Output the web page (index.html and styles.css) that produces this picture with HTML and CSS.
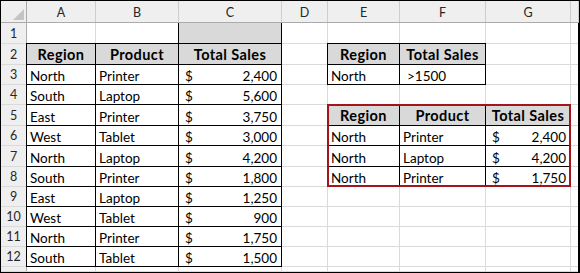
FILE: index.html
```html
<!DOCTYPE html>
<html>
<head>
<meta charset="utf-8">
<link rel="stylesheet" href="styles.css">
</head>
<body>
<div class="sheet">
  <!-- column headers -->
  <div class="corner"><svg width="25" height="21" viewBox="0 0 25 21"><polygon points="23,8 23,19 12,19" fill="#c4c4c4"/></svg></div>
  <div class="ch">A</div><div class="ch">B</div><div class="ch">C</div><div class="ch">D</div><div class="ch">E</div><div class="ch">F</div><div class="ch">G</div><div class="ch"></div>

  <!-- row 1 -->
  <div class="rh">1</div>
  <div class="c"></div><div class="c"></div><div class="c fill"></div><div class="c"></div><div class="c"></div><div class="c"></div><div class="c"></div><div class="c"></div>

  <!-- row 2 -->
  <div class="rh">2</div>
  <div class="c b h">Region</div><div class="c b h">Product</div><div class="c b h">Total Sales</div><div class="c"></div><div class="c b h">Region</div><div class="c b h">Total Sales</div><div class="c"></div><div class="c"></div>

  <!-- row 3 -->
  <div class="rh">3</div>
  <div class="c b">North</div><div class="c b">Printer</div><div class="c b n"><span>$</span><span>2,400</span></div><div class="c"></div><div class="c b">North</div><div class="c b crit">&gt;1500</div><div class="c"></div><div class="c"></div>

  <!-- row 4 -->
  <div class="rh">4</div>
  <div class="c b">South</div><div class="c b">Laptop</div><div class="c b n"><span>$</span><span>5,600</span></div><div class="c"></div><div class="c"></div><div class="c"></div><div class="c"></div><div class="c"></div>

  <!-- row 5 -->
  <div class="rh">5</div>
  <div class="c b">East</div><div class="c b">Printer</div><div class="c b n"><span>$</span><span>3,750</span></div><div class="c"></div><div class="c b h">Region</div><div class="c b h">Product</div><div class="c b h">Total Sales</div><div class="c"></div>

  <!-- row 6 -->
  <div class="rh">6</div>
  <div class="c b">West</div><div class="c b">Tablet</div><div class="c b n"><span>$</span><span>3,000</span></div><div class="c"></div><div class="c b">North</div><div class="c b">Printer</div><div class="c b n"><span>$</span><span>2,400</span></div><div class="c"></div>

  <!-- row 7 -->
  <div class="rh">7</div>
  <div class="c b">North</div><div class="c b">Laptop</div><div class="c b n"><span>$</span><span>4,200</span></div><div class="c"></div><div class="c b">North</div><div class="c b">Laptop</div><div class="c b n"><span>$</span><span>4,200</span></div><div class="c"></div>

  <!-- row 8 -->
  <div class="rh">8</div>
  <div class="c b">South</div><div class="c b">Printer</div><div class="c b n"><span>$</span><span>1,800</span></div><div class="c"></div><div class="c b">North</div><div class="c b">Printer</div><div class="c b n"><span>$</span><span>1,750</span></div><div class="c"></div>

  <!-- row 9 -->
  <div class="rh">9</div>
  <div class="c b">East</div><div class="c b">Laptop</div><div class="c b n"><span>$</span><span>1,250</span></div><div class="c"></div><div class="c"></div><div class="c"></div><div class="c"></div><div class="c"></div>

  <!-- row 10 -->
  <div class="rh">10</div>
  <div class="c b">West</div><div class="c b">Tablet</div><div class="c b n"><span>$</span><span>900</span></div><div class="c"></div><div class="c"></div><div class="c"></div><div class="c"></div><div class="c"></div>

  <!-- row 11 -->
  <div class="rh">11</div>
  <div class="c b">North</div><div class="c b">Printer</div><div class="c b n"><span>$</span><span>1,750</span></div><div class="c"></div><div class="c"></div><div class="c"></div><div class="c"></div><div class="c"></div>

  <!-- row 12 -->
  <div class="rh">12</div>
  <div class="c b">South</div><div class="c b">Tablet</div><div class="c b n"><span>$</span><span>1,500</span></div><div class="c"></div><div class="c"></div><div class="c"></div><div class="c"></div><div class="c"></div>

  <!-- row 13 (partial) -->
  <div class="rh"></div>
  <div class="c"></div><div class="c"></div><div class="c"></div><div class="c"></div><div class="c"></div><div class="c"></div><div class="c"></div><div class="c"></div>

  <!-- red outline over the extracted result (overlay) -->
  <div class="result-frame"></div>
</div>
</body>
</html>
```

FILE: styles.css
```css
body {
  margin: 0;
  background: #fff;
}

.sheet {
  position: relative;
  display: grid;
  grid-template-columns: 25px 68px 82px 102px 45px 71px 85px 84px 7px;
  grid-template-rows: 21px 20px 20px 19px 19px 20px 19px 20px 19px 19px 19px 19px 19px 4px 0px;
  gap: 1px;
  width: max-content;
  background: #dadada;
  border: 1px solid #000;
  border-right-width: 2px;
  font-family: Lato, "Liberation Sans", sans-serif;
  font-size: 13.5px;
  color: #000;
}

.corner {
  background: #efefef;
  box-shadow: 1px 0 0 #ababab, 0 1px 0 #ababab, 1px 1px 0 #ababab;
}

.corner svg {
  display: block;
}

.ch {
  background: #efefef;
  display: flex;
  align-items: flex-end;
  justify-content: center;
  padding-bottom: 1px;
  line-height: 16px;
  font-size: 12.5px;
  color: #262626;
  box-shadow: 1px 0 0 #cdcdcd, 0 1px 0 #ababab, 1px 1px 0 #ababab;
}

.rh {
  background: #efefef;
  display: flex;
  align-items: flex-end;
  justify-content: center;
  padding-bottom: 1px;
  line-height: 16px;
  font-size: 12.5px;
  color: #262626;
  overflow: hidden;
  box-shadow: 1px 0 0 #ababab;
}

.c {
  background: #fff;
  display: flex;
  align-items: flex-end;
  padding: 0 2px 0 3px;
  line-height: 16px;
  white-space: nowrap;
  overflow: hidden;
}

.fill {
  background: #d9d9d9;
  box-shadow: -1px 0 0 #000, 1px 0 0 #000;
}

.b {
  box-shadow: 0 0 0 1px #000;
}

.h {
  background: #d9d9d9;
  font-weight: 700;
  font-size: 14.5px;
  letter-spacing: 0.4px;
  justify-content: center;
  padding: 0 1px 1px;
}

.n {
  justify-content: space-between;
  padding: 0 4px 0 6px;
}

.crit {
  padding-left: 7px;
}

.result-frame {
  position: absolute;
  grid-row: 6 / 10;
  grid-column: 6 / 9;
  inset: -1px;
  border: 2px solid #a3141c;
  pointer-events: none;
}
```
